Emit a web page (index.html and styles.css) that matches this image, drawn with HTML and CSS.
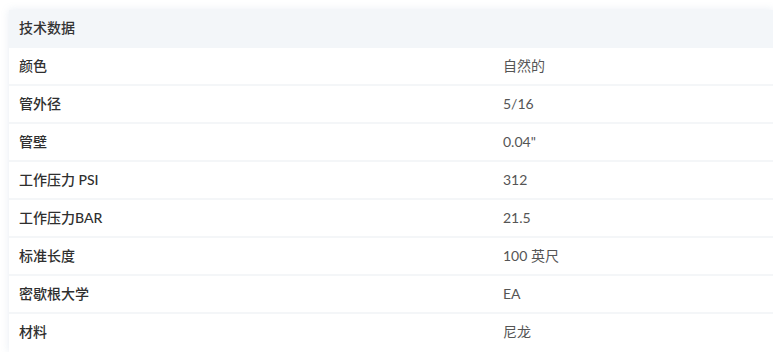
FILE: index.html
```html
<!DOCTYPE html>
<html lang="zh">
<head>
<meta charset="utf-8">
<link rel="stylesheet" href="styles.css">
</head>
<body>
<div class="page">
  <div class="specs">
    <div class="head">技术数据</div>
    <div class="row"><div class="k">颜色</div><div class="v">自然的</div></div>
    <div class="row"><div class="k">管外径</div><div class="v">5/16</div></div>
    <div class="row"><div class="k">管壁</div><div class="v">0.04"</div></div>
    <div class="row"><div class="k">工作压力 PSI</div><div class="v">312</div></div>
    <div class="row"><div class="k">工作压力BAR</div><div class="v">21.5</div></div>
    <div class="row"><div class="k">标准长度</div><div class="v">100 英尺</div></div>
    <div class="row"><div class="k">密歇根大学</div><div class="v">EA</div></div>
    <div class="row last"><div class="k">材料</div><div class="v">尼龙</div></div>
  </div>
</div>
</body>
</html>
```
FILE: styles.css
```css
html, body {
  margin: 0;
  padding: 0;
  background: #ffffff;
  overflow: hidden;
}
.page {
  padding: 10px 0 0 9px;
}
.specs {
  background: #fff;
  box-shadow: 0 0 8px rgba(120, 150, 190, 0.18);
  font-family: Lato, "Noto Sans CJK SC", sans-serif;
  font-size: 14px;
  color: #333;
}
.head {
  height: 38px;
  line-height: 35px;
  padding: 0 10px;
  background: #f3f6f9;
  font-weight: 500;
  color: #333;
}
.row {
  display: grid;
  grid-template-columns: 485px 1fr;
  height: 38px;
  box-sizing: border-box;
  align-items: center;
  padding-bottom: 2px;
  border-bottom: 2px solid #f4f6f8;
}
.row.last {
  border-bottom-color: #fff;
}
.k {
  padding: 0 10px;
  font-weight: 500;
  color: #2f2f2f;
}
.v {
  padding: 0 10px 0 9px;
  font-weight: 400;
  color: #555;
}
```
